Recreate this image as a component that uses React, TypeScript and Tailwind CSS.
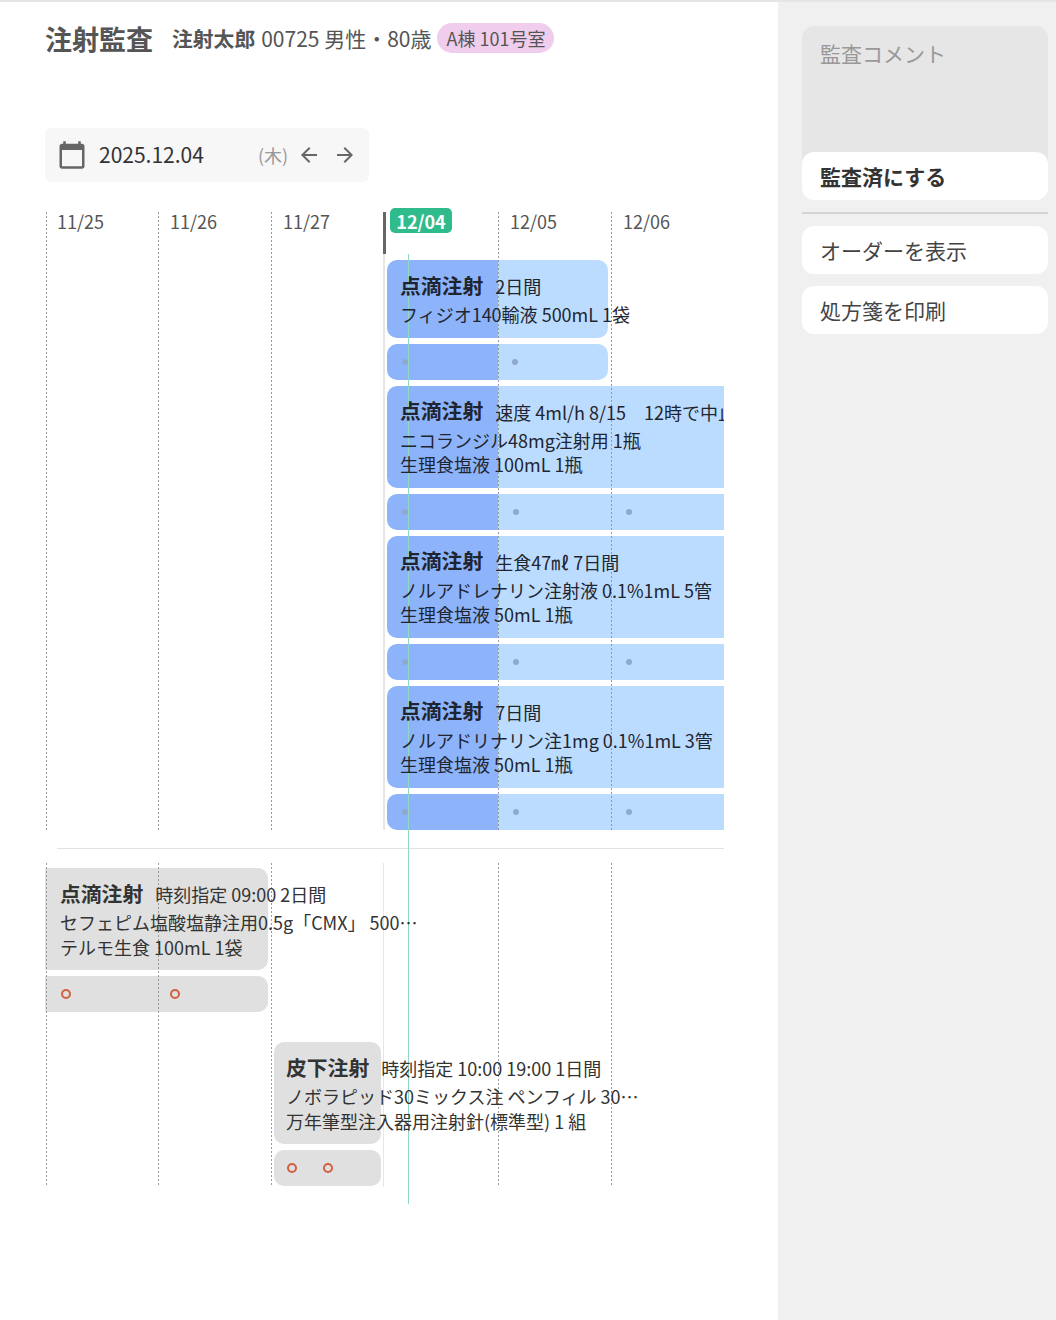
import React from 'react'

const FONT = "font-['Noto_Sans_CJK_JP','Noto_Sans',sans-serif]"

type Order = {
  kind: string
  note: string
  lines: string[]
  dots: number
}

const topOrders: Order[] = [
  { kind: '点滴注射', note: '2日間', lines: ['フィジオ140輸液 500mL 1袋'], dots: 2 },
  {
    kind: '点滴注射',
    note: '速度 4ml/h 8/15　12時で中止',
    lines: ['ニコランジル48mg注射用 1瓶', '生理食塩液 100mL 1瓶'],
    dots: 3,
  },
  {
    kind: '点滴注射',
    note: '生食47㎖ 7日間',
    lines: ['ノルアドレナリン注射液 0.1%1mL 5管', '生理食塩液 50mL 1瓶'],
    dots: 3,
  },
  {
    kind: '点滴注射',
    note: '7日間',
    lines: ['ノルアドリナリン注1mg 0.1%1mL 3管', '生理食塩液 50mL 1瓶'],
    dots: 3,
  },
]

const columns = [
  { label: '11/25', width: 'w-[112px]', label_cls: 'w-[112px] pl-3' },
  { label: '11/26', width: 'w-[113px]', label_cls: 'w-[113px] pl-[13px]' },
  { label: '11/27', width: 'w-[113px]', label_cls: 'w-[113px] pl-[13px]' },
  { label: '', width: 'w-[114px]', label_cls: 'w-[114px]' },
  { label: '12/05', width: 'w-[113px]', label_cls: 'w-[113px] pl-[13px]' },
  { label: '12/06', width: 'w-[113px]', label_cls: 'w-[113px] pl-[13px]' },
]

const GridLines: React.FC<{ solid: string; top: string }> = ({ solid, top }) => (
  <div className={`absolute z-[5] inset-x-0 bottom-0 flex pointer-events-none ${top}`}>
    {columns.map((col, i) => (
      <div className={col.width} key={i}>
        {i === 3 ? (
          <div className={`h-full bg-[#e6e6e6] ${solid}`} />
        ) : (
          <div className="w-px ml-px h-full bg-[repeating-linear-gradient(180deg,#9a9a9a_0,#9a9a9a_2px,transparent_2px,transparent_4px)]" />
        )}
      </div>
    ))}
  </div>
)

const OrderTitle: React.FC<{ kind: string; note: string }> = ({ kind, note }) => (
  <div className="flex items-center h-[29px] mb-px whitespace-nowrap">
    <span className="text-[20.8px] font-bold -translate-y-px">{kind}</span>
    <span className="ml-3 text-[18px]">{note}</span>
  </div>
)

const TopRow: React.FC<{ order: Order; short?: boolean }> = ({ order, short }) => (
  <div className={`ml-[342px] flex flex-col gap-1.5 ${short ? 'w-[221px]' : 'w-[337px]'}`}>
    <div
      className={`pl-[13px] pt-3 pb-[11px] rounded-l-[10px] text-[#1f2530] bg-[linear-gradient(90deg,#8db4fa_111px,#bbdcfe_111px)] ${
        short ? 'rounded-r-[10px]' : ''
      }`}
    >
      <div className="relative z-10">
        <OrderTitle kind={order.kind} note={order.note} />
        {order.lines.map((line) => (
          <div className="text-[18px] leading-[24.5px] whitespace-nowrap" key={line}>
            {line}
          </div>
        ))}
      </div>
    </div>
    <div
      className={`h-9 flex items-center rounded-l-[10px] bg-[linear-gradient(90deg,#8db4fa_111px,#bbdcfe_111px)] ${
        short ? 'rounded-r-[10px]' : ''
      }`}
    >
      {Array.from({ length: order.dots }).map((_, i) => (
        <div className={`pl-[15px] ${i === 0 ? 'w-[111px]' : 'w-[113px]'}`} key={i}>
          <div className="w-1.5 h-1.5 rounded-full bg-[#8fa9cd]" />
        </div>
      ))}
    </div>
  </div>
)

const RingDot: React.FC = () => (
  <div className="w-2.5 h-2.5 rounded-full border-[2.5px] border-[#d2603f]" />
)

const App: React.FC = () => {
  return (
    <div
      lang="ja"
      className={`${FONT} flex min-h-[1320px] border-t-2 border-[#e5e5e5] bg-white text-[#444]`}
    >
      <main className="w-[778px] pl-[45px] pt-[19px]">
        {/* Header */}
        <div className="flex items-center h-9 whitespace-nowrap">
          <h1 className="text-[27px] font-bold text-[#555]">注射監査</h1>
          <span className="ml-[19px] text-[20.8px] font-bold text-[#555]">注射太郎</span>
          <span className="ml-[6px] text-[21px] text-[#555]">00725 男性・80歳</span>
          <span className="ml-[6px] -mt-0.5 h-[30px] px-[9px] flex items-center rounded-full bg-[#f0cdec] text-[18px] text-[#555]">
            A棟 101号室
          </span>
        </div>

        {/* Date picker */}
        <div className="mt-[71px] w-[324px] h-[54px] flex items-center rounded-md bg-[#f7f7f7]">
          <svg className="ml-[12px] w-[30px] h-[30px] text-[#666]" fill="currentColor" viewBox="0 0 24 24">
            <path d="M20 3h-1V1h-2v2H7V1H5v2H4c-1.1 0-2 .9-2 2v16c0 1.1.9 2 2 2h16c1.1 0 2-.9 2-2V5c0-1.1-.9-2-2-2zm0 18H4V8h16v13z" />
          </svg>
          <span className="ml-[12px] w-[159px] text-[21px] text-[#333]">2025.12.04</span>
          <span className="text-[18px] text-[#999]">(木)</span>
          <svg className="ml-[9px] w-[24px] h-[24px] text-[#666]" fill="currentColor" viewBox="0 0 24 24">
            <path d="M20 11H7.83l5.59-5.59L12 4l-8 8 8 8 1.41-1.41L7.83 13H20v-2z" />
          </svg>
          <svg className="ml-[12px] w-[24px] h-[24px] text-[#666]" fill="currentColor" viewBox="0 0 24 24">
            <path d="M12 4l-1.41 1.41L16.17 11H4v2h12.17l-5.58 5.59L12 20l8-8z" />
          </svg>
        </div>

        {/* Timeline */}
        <div className="relative mt-[26px] w-[679px]">
          <section className="relative h-[622px] overflow-x-clip">
            <div className="flex h-[52px] text-[18px] leading-[26px] text-[#555]">
              {columns.map((col, i) => (
                <div className={`relative ${col.label_cls}`} key={i}>
                  {col.label}
                  {i === 3 && (
                    <>
                      <div className="absolute z-10 left-0 top-1 w-[3px] h-[42px] bg-[#666]" />
                      <span className="absolute left-[7px] top-0 w-[62px] h-[25px] flex items-center justify-center rounded-[5px] bg-[#2fbb8b] text-white font-bold">
                        12/04
                      </span>
                    </>
                  )}
                </div>
              ))}
            </div>
            <div className="flex flex-col gap-1.5">
              {topOrders.map((order, i) => (
                <TopRow key={i} order={order} short={i === 0} />
              ))}
            </div>
            <GridLines solid="w-0.5" top="top-1" />
          </section>

          <div className="mt-[18px] ml-3 h-px bg-[#e2e2e2]" />

          <section className="relative mt-[14px] h-[324px] text-[#333]">
            <div className="pt-[5px]">
              <div className="w-[223px] pl-[15px] pt-3 pb-[11px] rounded-r-[10px] bg-[#e0e0e0]">
                <div className="relative z-10">
                  <OrderTitle kind="点滴注射" note="時刻指定 09:00 2日間" />
                  <div className="w-[360px] text-[18px] leading-[24.5px] truncate">
                    セフェピム塩酸塩静注用0.5g「CMX」 500mg 1瓶
                  </div>
                  <div className="text-[18px] leading-[24.5px] whitespace-nowrap">テルモ生食 100mL 1袋</div>
                </div>
              </div>
              <div className="mt-1.5 w-[223px] h-9 flex items-center rounded-r-[10px] bg-[#e0e0e0]">
                <div className="w-[110px] pl-[16px]"><RingDot /></div>
                <div className="w-[109px] pl-[15px]"><RingDot /></div>
              </div>
            </div>
            <div className="mt-[30px] ml-[229px]">
              <div className="w-[107px] pl-3 pt-3 pb-[11px] rounded-[10px] bg-[#e0e0e0]">
                <div className="relative z-10">
                  <OrderTitle kind="皮下注射" note="時刻指定 10:00 19:00 1日間" />
                  <div className="w-[353px] text-[18px] leading-[24.5px] truncate">
                    ノボラピッド30ミックス注 ペンフィル 300単位
                  </div>
                  <div className="text-[18px] leading-[24.5px] whitespace-nowrap">万年筆型注入器用注射針(標準型) 1 組</div>
                </div>
              </div>
              <div className="mt-1.5 w-[107px] h-9 flex items-center gap-[26px] pl-[13px] rounded-[10px] bg-[#e0e0e0]">
                <RingDot />
                <RingDot />
              </div>
            </div>
            <GridLines solid="w-px" top="top-0" />
          </section>

          {/* Now line */}
          <div className="absolute z-[5] left-[363px] top-[46px] w-px h-[950px] bg-[#8fd8c8]" />
        </div>
      </main>

      {/* Audit panel */}
      <aside className="flex-1 bg-[#f0f0f0] pt-6 pl-6 pr-2">
        <div className="h-[139px] px-[18px] pt-[12px] rounded-t-xl bg-[#e6e6e6] text-[21px] text-[#999]">
          監査コメント
        </div>
        <button className="-mt-[13px] relative block w-full h-12 pl-[18px] pt-0.5 text-left rounded-xl bg-white text-[21px] font-bold text-[#333]" type="button">
          監査済にする
        </button>
        <div className="mt-3 h-0.5 bg-[#d4d4d4]" />
        <button className="mt-3 block w-full h-12 pl-[18px] pt-0.5 text-left rounded-xl bg-white text-[21px] text-[#444]" type="button">
          オーダーを表示
        </button>
        <button className="mt-3 block w-full h-12 pl-[18px] pt-0.5 text-left rounded-xl bg-white text-[21px] text-[#444]" type="button">
          処方箋を印刷
        </button>
      </aside>
    </div>
  )
}

export default App
